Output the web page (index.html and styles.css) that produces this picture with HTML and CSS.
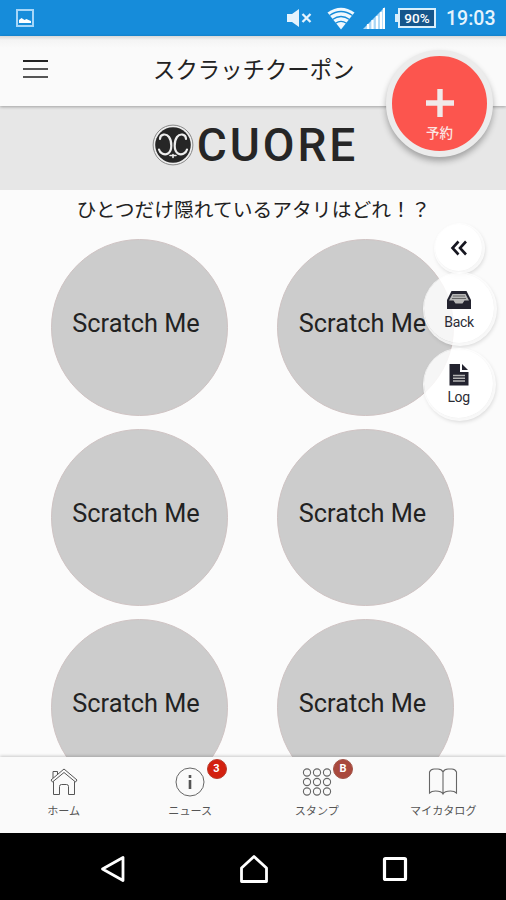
FILE: index.html
```html
<!DOCTYPE html>
<html lang="ja">
<head>
<meta charset="utf-8">
<title>スクラッチクーポン</title>
<link rel="stylesheet" href="styles.css">
</head>
<body>
<div class="screen">
  <div class="status">
    <svg class="st-photo" width="18" height="18" viewBox="0 0 18 18"><rect x="1" y="1" width="16" height="16" fill="none" stroke="#a6d6f8" stroke-width="2"/><path d="M3 14v-3l2.500-2 3 2 2-1 2 1 2.500 1v2z" fill="#fff"/></svg>
    <svg class="st-mute" width="26" height="20" viewBox="0 0 26 20"><path d="M1 6h5l7-5v18l-7-5H1z" fill="#e4f3fd"/><path d="M16.500 6l8 8m0-8l-8 8" stroke="#e4f3fd" stroke-width="2.300"/></svg>
    <svg class="st-wifi" width="28" height="23" viewBox="0 0 28 23"><path d="M14 22.500L.500 5.500Q14-4 27.500 5.500z" fill="#eff8fe"/><path d="M2.500 8.500Q14 .500 25.500 8.500M5.500 12.500Q14 6.500 22.500 12.500M8.500 16.300Q14 12.300 19.500 16.300" fill="none" stroke="#168cda" stroke-width="1.300"/></svg>
    <svg class="st-signal" width="22" height="22" viewBox="0 0 22 22"><path d="M0 22L22 0v22z" fill="#a9d6f6"/><path d="M5 22v-5m4.500 5v-9m4.500 9V9m4 13V5m3 17V1" stroke="#fff" stroke-width="2.200"/></svg>
    <div class="battery">90%</div>
    <div class="clock">19:03</div>
  </div>
  <header class="bar">
    <div class="menu"><i></i><i></i><i></i></div>
    <h1>スクラッチクーポン</h1>
  </header>
  <main>
    <div class="brand">
      <svg width="42" height="42" viewBox="0 0 42 42"><circle cx="21" cy="21" r="19.900" fill="#eee" stroke="#888" stroke-width="1"/><circle cx="21" cy="21" r="17.800" fill="#262626"/><g fill="none" stroke="#eee" stroke-linecap="round" stroke-width="2.200"><path d="M8 15C8 10 14 9 17 13c3 4 3.500 14-1 16.500-3.500 2-8 0-9-4"/><path d="M34 15c0-5-6-6-9-2-3 4-3.500 14 1 16.500 3.500 2 8 0 9-4"/><path d="M18 31.500h6M21 30.500v3" stroke-width="1.600"/></g></svg>
      <span>CUORE</span>
    </div>
    <p class="lead">ひとつだけ隠れているアタリはどれ！？</p>
    <div class="grid">
      <div class="disc">Scratch Me</div><div class="disc">Scratch Me</div>
      <div class="disc">Scratch Me</div><div class="disc">Scratch Me</div>
      <div class="disc">Scratch Me</div><div class="disc">Scratch Me</div>
    </div>
  </main>
  <nav class="tabs">
    <div class="tab">
      <svg width="30" height="32" viewBox="0 0 30 32"><g fill="none" stroke="#555" stroke-width="1"><path d="M2 14L15 3l13 11-1.500 2L15 6.500 3.500 16z"/><path d="M4.500 15.500v13h6v-8q0-2 2-2h5q2 0 2 2v8h6v-13M4 12V5.500h4.500V8"/></g></svg>
      <span>ホーム</span>
    </div>
    <div class="tab">
      <svg width="30" height="32" viewBox="0 0 30 32"><circle cx="15" cy="16" r="14" fill="none" stroke="#666" stroke-width="1"/><path d="M15 9v3m0 2v9" stroke="#555" stroke-width="2.600"/></svg>
      <span>ニュース</span><b class="badge">3</b>
    </div>
    <div class="tab">
      <svg width="30" height="32" viewBox="0 0 30 32"><g fill="none" stroke="#666" stroke-width="1.100"><circle cx="5" cy="6.500" r="3.600"/><circle cx="15" cy="6.500" r="3.600"/><circle cx="25" cy="6.500" r="3.600"/><circle cx="5" cy="16" r="3.600"/><circle cx="15" cy="16" r="3.600"/><circle cx="25" cy="16" r="3.600"/><circle cx="5" cy="25.500" r="3.600"/><circle cx="15" cy="25.500" r="3.600"/><circle cx="25" cy="25.500" r="3.600"/></g></svg>
      <span>スタンプ</span><b class="badge muted">B</b>
    </div>
    <div class="tab">
      <svg width="30" height="32" viewBox="0 0 30 32"><path d="M15 6q-1.500-3-5-3H6Q3 3 1.500 6v21q2-2 6-2 6 0 7.500 3 1.500-3 7.500-3 4 0 6 2V6Q27 3 24 3h-4q-3.500 0-5 3zM15 6v22" fill="none" stroke="#666" stroke-width="1.100"/></svg>
      <span>マイカタログ</span>
    </div>
  </nav>
  <div class="system">
    <svg width="26" height="28" viewBox="0 0 26 28"><path d="M23 2.500v23L2.500 14z" fill="none" stroke="#fff" stroke-width="2.800" stroke-linejoin="round"/></svg>
    <svg width="30" height="30" viewBox="0 0 30 30"><path d="M2.500 27.500V14L15 2.500 27.500 14v13.500z" fill="none" stroke="#fff" stroke-width="2.800" stroke-linejoin="round"/></svg>
    <svg width="26" height="26" viewBox="0 0 26 26"><rect x="2.500" y="2.500" width="21" height="21" rx="1" fill="none" stroke="#fff" stroke-width="3.200"/></svg>
  </div>

  <div class="reserve">
    <svg width="30" height="30" viewBox="0 0 30 30"><path d="M15 1v28M1 15h28" stroke="#f0e9e9" stroke-width="5.400"/></svg>
    <span>予約</span>
  </div>
  <div class="float collapse"><svg width="18" height="16" viewBox="0 0 18 16"><path d="M8.500 1.500L2.500 8l6 6.500M16 1.500L10 8l6 6.500" fill="none" stroke="#161620" stroke-width="2.600"/></svg></div>
  <div class="float back">
    <svg width="26" height="18" viewBox="0 0 26 18"><path d="M1 9L5.500 0h15L25 9v9H1z" fill="#23232f"/><path d="M6.500 3h13L23 9.500h-4.500l-2 3h-7l-2-3H3z" fill="#b8b8b8"/><path d="M7 5h12M6 7.500h14" stroke="#666" stroke-width="1"/></svg>
    <span>Back</span>
  </div>
  <div class="float log">
    <svg width="20" height="23" viewBox="0 0 20 23"><path d="M.500 1h10.500v8h8.500v13.500H.500z" fill="#23232f"/><path d="M13 1l6 6h-6z" fill="#23232f"/><path d="M4 12.500h12M4 15.200h12M4 18h12" stroke="#b5b5b5" stroke-width="1.600"/></svg>
    <span>Log</span>
  </div>
</div>
</body>
</html>
```

FILE: styles.css
```css
* { box-sizing: border-box; }
body { margin: 0; font-family: Roboto, "Noto Sans CJK JP", sans-serif; color: #222; }
svg { display: block; flex: none; }
.screen { position: relative; width: 506px; height: 900px; overflow: hidden; display: flex; flex-direction: column; background: #fbfbfb; }

.status { height: 36px; flex: none; display: flex; align-items: center; background: #168cda; padding: 0 10px 0 16px; color: #fff; }
.st-mute { margin-left: auto; }
.st-wifi { margin-left: 15px; }
.st-signal { margin-left: 8px; }
.battery { position: relative; width: 38px; height: 20px; margin-left: 13px; border: 2px solid #d9effc; background: #15568b; font-size: 13.5px; font-weight: 500; line-height: 17px; text-align: center; }
.battery::before { content: ""; position: absolute; left: -5px; top: 4px; width: 3px; height: 8px; background: #d9effc; }
.clock { margin-left: 10px; font-size: 19.5px; font-weight: 500; line-height: 36px; padding-top: 2px; width: 50px; white-space: nowrap; color: #e6f4fd; }

.bar { position: relative; height: 70px; flex: none; display: flex; align-items: center; padding-left: 23px; background: linear-gradient(#d8d8d8, #f4f4f4 4px, #fafafa 12px); box-shadow: 0 1px 3px rgba(0, 0, 0, .3); }
.menu { display: flex; flex-direction: column; gap: 5.5px; width: 25px; margin-bottom: 4px; }
.menu i { height: 2.5px; background: #555; }
.menu i:first-child { background: #222; }
h1 { margin: 0 0 2px 105px; font-size: 22.4px; font-weight: 400; line-height: 30px; white-space: nowrap; }

main { flex: 1; min-height: 0; overflow: hidden; }
.brand { height: 84px; display: flex; justify-content: center; align-items: flex-start; gap: 3px; padding-top: 18px; padding-left: 4px; background: #e7e7e7; }
.brand span { font: 500 46px/42px Roboto, sans-serif; color: #262626; letter-spacing: 2.9px; }
.lead { margin: 0; height: 49px; padding: 6px 0 0 1px; font-size: 19.8px; line-height: 30px; text-align: center; white-space: nowrap; }
.grid { display: grid; grid-template-columns: 177px 177px; column-gap: 49.5px; row-gap: 13px; padding-left: 50.5px; }
.disc { height: 177px; padding: 0 6px 8px 0; display: flex; align-items: center; justify-content: center; border-radius: 50%; background: #ccc; border: 1px solid #cfc3c3; font-size: 25.3px; white-space: nowrap; }

.tabs { position: relative; height: 76px; flex: none; display: grid; grid-template-columns: repeat(4, 1fr); background: #fafafa; box-shadow: 0 -1px 3px rgba(0, 0, 0, .2); }
.tab { position: relative; display: flex; flex-direction: column; align-items: center; padding-top: 9px; padding-left: 1px; font-size: 11.1px; line-height: 16px; color: #555; }
.tab span { margin-top: 5.5px; white-space: nowrap; }
.badge { position: absolute; left: 80px; top: 2px; width: 20px; height: 20px; border-radius: 50%; background: #d3200f; border: 1px solid #b93b2c; color: #fff; font-size: 11px; line-height: 18px; text-align: center; }
.badge.muted { background: #a9493d; border-color: #a35549; }

.system { height: 67px; flex: none; background: #000; display: flex; justify-content: center; align-items: center; gap: 113px; padding: 4px 0 0 1px; }

.reserve { position: absolute; left: 386px; top: 50px; width: 107px; height: 107px; border: 6px solid #ececec; border-radius: 50%; background: #fc554e; box-shadow: 0 4px 6px rgba(0, 0, 0, .3); display: flex; flex-direction: column; align-items: center; padding-top: 32px; color: #fbe5e2; font-size: 13.5px; font-weight: 500; line-height: 18px; }
.reserve span { margin-top: 6px; }

.float { position: absolute; border-radius: 50%; background: rgba(255, 255, 255, .82); box-shadow: 1px 1px 0 2px rgba(255, 255, 255, .8), 2px 3px 4px 1px rgba(0, 0, 0, .15); display: flex; flex-direction: column; align-items: center; font-size: 14px; line-height: 17px; color: #2c2c35; }
.collapse { left: 435px; top: 224px; width: 47px; height: 47px; justify-content: center; }
.back { left: 424px; top: 273px; width: 70px; height: 70px; padding-top: 18px; }
.log { left: 424px; top: 349px; width: 69px; height: 69px; padding-top: 14px; }
.back span { margin-top: 5px; letter-spacing: -.3px; }
.log span { margin-top: 3px; letter-spacing: -.4px; }
```
